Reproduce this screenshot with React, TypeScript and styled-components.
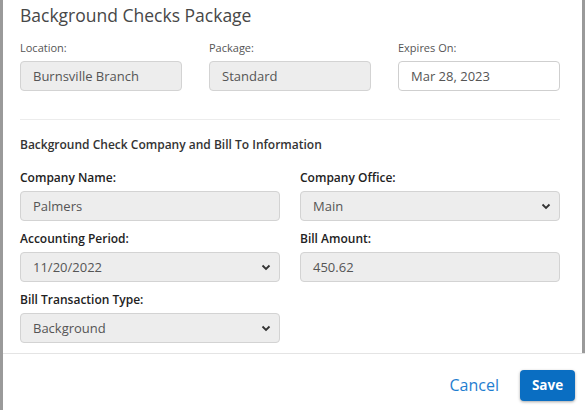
import React from "react";
import styled, { createGlobalStyle } from "styled-components";

const FONT = `"Open Sans", "DejaVu Sans", sans-serif`;

const Global = createGlobalStyle`
  html, body { margin: 0; padding: 0; background: #fff; }
  body { font-family: ${FONT}; }
  * { box-sizing: border-box; }
`;

const Frame = styled.div`
  width: 585px;
  height: 410px;
  display: flex;
  flex-direction: column;
  border-left: 3px solid #9a9a9a;
  overflow: hidden;
`;

const Body = styled.div`
  flex: 0 0 353px;
  border-right: 3px solid #9a9a9a;
  padding: 3px 0 0 17px;
  width: 582px;
`;

const Inner = styled.div`
  width: 540px;
`;

const Title = styled.h1`
  margin: 0;
  font-size: 17.5px;
  font-weight: 400;
  color: #474747;
  line-height: 24px;
`;

const Grid = styled.div<{ $cols: number; $gap: number }>`
  display: grid;
  grid-template-columns: repeat(${(p) => p.$cols}, 1fr);
  column-gap: ${(p) => p.$gap}px;
`;

const Field = styled.div``;

const SmallLabel = styled.div`
  font-size: 11px;
  color: #555;
  line-height: 14px;
  margin: 14px 0 6px;
`;

const BoldLabel = styled.div`
  font-size: 12px;
  font-weight: 600;
  color: #222;
  line-height: 15px;
  margin: 0 0 6px;
`;

const Input = styled.div<{ $white?: boolean }>`
  height: 30px;
  border: 1px solid ${(p) => (p.$white ? "#cfcfcf" : "#d3d3d3")};
  border-radius: 4px;
  background: ${(p) => (p.$white ? "#fff" : "#ededed")};
  color: #555;
  font-size: 13px;
  display: flex;
  align-items: center;
  justify-content: space-between;
  padding: 0 8px 0 12px;
`;

const Divider = styled.div`
  height: 1px;
  background: #ececec;
  margin: 28px 0 0;
`;

const Section = styled.div`
  font-size: 12px;
  font-weight: 600;
  color: #333;
  margin: 17px 0 18px;
  line-height: 15px;
`;

const Footer = styled.div`
  flex: 1;
  border-top: 1px solid #e4e4e4;
  display: flex;
  align-items: center;
  justify-content: flex-end;
  gap: 21px;
  padding: 6px 10px 0 0;
`;

const Cancel = styled.span`
  color: #1f7ed0;
  font-size: 16px;
`;

const Save = styled.button`
  font-family: ${FONT};
  width: 55px;
  height: 31px;
  border: none;
  border-radius: 4px;
  background: #0a6ec2;
  color: #fff;
  font-size: 13.5px;
  font-weight: 700;
  box-shadow: 0 1px 3px rgba(0,0,0,0.35);
`;

const Chevron = () => (
  <svg width="10" height="7" viewBox="0 0 10 7">
    <path d="M1.5 1.5 L5 5 L8.5 1.5" fill="none" stroke="#333" strokeWidth="1.8" />
  </svg>
);

const Row = styled.div`
  margin-bottom: 10px;
`;

export default function App() {
  return (
    <>
      <Global />
      <Frame>
        <Body>
          <Inner>
            <Title>Background Checks Package</Title>
            <Grid $cols={3} $gap={27}>
              <Field>
                <SmallLabel>Location:</SmallLabel>
                <Input>Burnsville Branch</Input>
              </Field>
              <Field>
                <SmallLabel>Package:</SmallLabel>
                <Input>Standard</Input>
              </Field>
              <Field>
                <SmallLabel>Expires On:</SmallLabel>
                <Input $white>Mar 28, 2023</Input>
              </Field>
            </Grid>
            <Divider />
            <Section>Background Check Company and Bill To Information</Section>
            <Row>
              <Grid $cols={2} $gap={20}>
                <Field>
                  <BoldLabel>Company Name:</BoldLabel>
                  <Input>Palmers</Input>
                </Field>
                <Field>
                  <BoldLabel>Company Office:</BoldLabel>
                  <Input>Main<Chevron /></Input>
                </Field>
              </Grid>
            </Row>
            <Row>
              <Grid $cols={2} $gap={20}>
                <Field>
                  <BoldLabel>Accounting Period:</BoldLabel>
                  <Input>11/20/2022<Chevron /></Input>
                </Field>
                <Field>
                  <BoldLabel>Bill Amount:</BoldLabel>
                  <Input>450.62</Input>
                </Field>
              </Grid>
            </Row>
            <Grid $cols={2} $gap={20}>
              <Field>
                <BoldLabel>Bill Transaction Type:</BoldLabel>
                <Input>Background<Chevron /></Input>
              </Field>
            </Grid>
          </Inner>
        </Body>
        <Footer>
          <Cancel>Cancel</Cancel>
          <Save>Save</Save>
        </Footer>
      </Frame>
    </>
  );
}
